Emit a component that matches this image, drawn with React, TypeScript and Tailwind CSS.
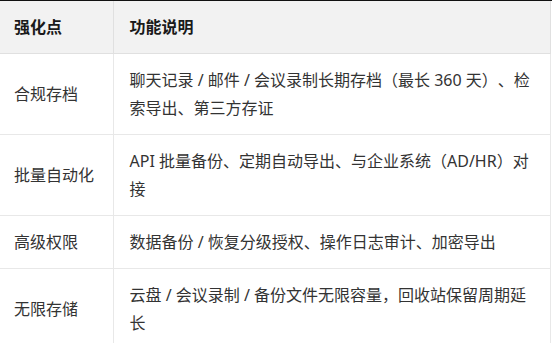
const rows = [
  {
    point: "合规存档",
    desc: "聊天记录 / 邮件 / 会议录制长期存档（最长 360 天）、检索导出、第三方存证",
  },
  {
    point: "批量自动化",
    desc: "API 批量备份、定期自动导出、与企业系统（AD/HR）对接",
  },
  {
    point: "高级权限",
    desc: "数据备份 / 恢复分级授权、操作日志审计、加密导出",
  },
  {
    point: "无限存储",
    desc: "云盘 / 会议录制 / 备份文件无限容量，回收站保留周期延长",
  },
]

export default function App() {
  return (
    <div
      className="w-[552px] h-[343px] overflow-hidden bg-white border-t border-[#111] [text-spacing-trim:space-all]"
      style={{ fontFamily: '"Noto Sans", "Noto Sans CJK SC", sans-serif' }}
    >
      <table className="w-[551px] border-collapse text-[16px] leading-[28px] table-fixed">
        <colgroup>
          <col className="w-[113px]" />
          <col />
        </colgroup>
        <thead>
          <tr className="bg-[#f2f2f2]">
            <th className="h-[52px] pl-[14px] pr-3 text-left font-bold text-[#1a1a1a] border-r border-b border-[#e0e0e0] align-middle">
              强化点
            </th>
            <th className="pl-[16px] pr-3 text-left font-bold text-[#1a1a1a] border-b border-r border-[#e0e0e0] align-middle">
              功能说明
            </th>
          </tr>
        </thead>
        <tbody>
          {rows.map((row) => (
            <tr key={row.point}>
              <td className="py-3 pl-[14px] pr-2 text-[#333] border-r border-b border-[#e8e8e8] align-middle">
                {row.point}
              </td>
              <td className="py-3 pl-[16px] pr-[16px] text-[#333] border-b border-r border-[#e8e8e8] align-middle">
                {row.desc}
              </td>
            </tr>
          ))}
        </tbody>
      </table>
    </div>
  )
}
